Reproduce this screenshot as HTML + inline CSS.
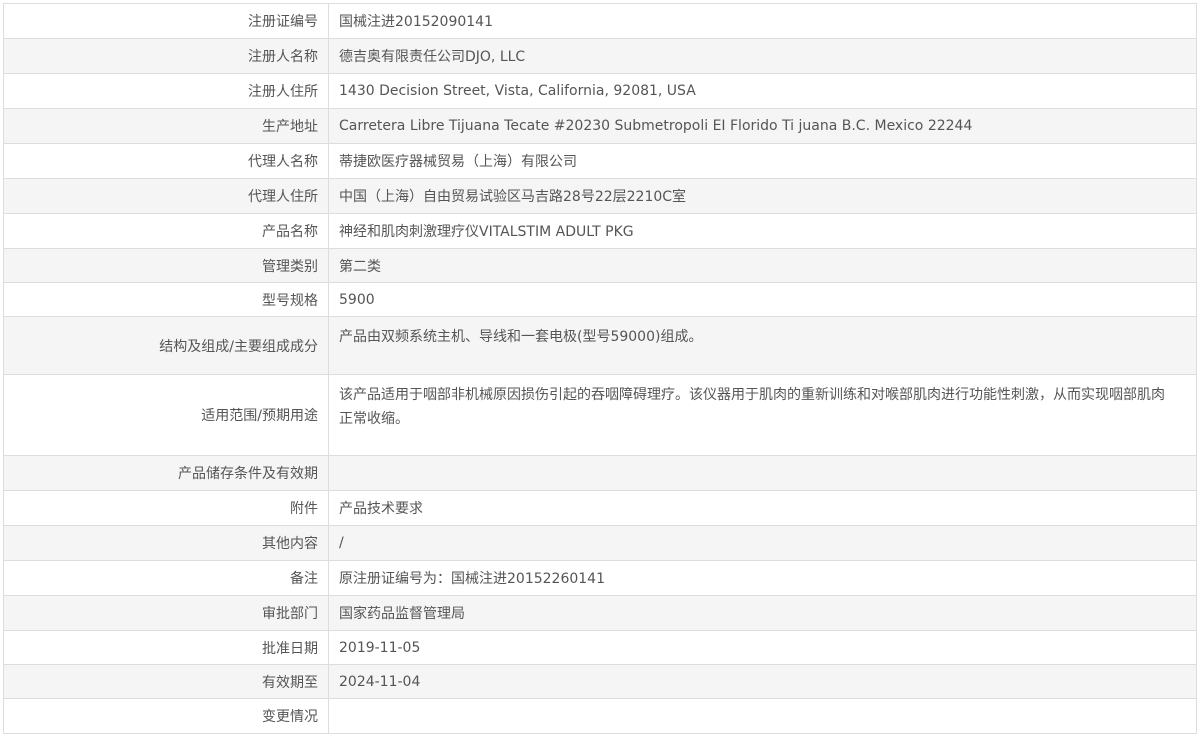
<!DOCTYPE html>
<html><head><meta charset="utf-8"><style>
body{margin:0;background:#fff;}
table{position:absolute;left:3px;top:3px;width:1194px;border-collapse:collapse;font-family:"DejaVu Sans","Noto Sans CJK SC",sans-serif;font-size:14px;color:#555;table-layout:fixed;}
td{border:1px solid #ddd;padding:0 10px;box-sizing:border-box;}
td.l{width:325px;text-align:right;vertical-align:middle;}
td.v{vertical-align:middle;}
td.t{vertical-align:top;padding-top:8px;line-height:24px;}
tr:nth-child(even) td{background:#f5f5f5;}
</style></head><body>
<table>
<tr style="height:35px"><td class="l">注册证编号</td><td class="v">国械注进20152090141</td></tr>
<tr style="height:35px"><td class="l">注册人名称</td><td class="v">德吉奥有限责任公司DJO, LLC</td></tr>
<tr style="height:35px"><td class="l">注册人住所</td><td class="v">1430 Decision Street, Vista, California, 92081, USA</td></tr>
<tr style="height:35px"><td class="l">生产地址</td><td class="v">Carretera Libre Tijuana Tecate #20230 Submetropoli EI Florido Ti juana B.C. Mexico 22244</td></tr>
<tr style="height:35px"><td class="l">代理人名称</td><td class="v">蒂捷欧医疗器械贸易（上海）有限公司</td></tr>
<tr style="height:35px"><td class="l">代理人住所</td><td class="v">中国（上海）自由贸易试验区马吉路28号22层2210C室</td></tr>
<tr style="height:35px"><td class="l">产品名称</td><td class="v">神经和肌肉刺激理疗仪VITALSTIM ADULT PKG</td></tr>
<tr style="height:34px"><td class="l">管理类别</td><td class="v">第二类</td></tr>
<tr style="height:34px"><td class="l">型号规格</td><td class="v">5900</td></tr>
<tr style="height:58px"><td class="l">结构及组成/主要组成成分</td><td class="t">产品由双频系统主机、导线和一套电极(型号59000)组成。</td></tr>
<tr style="height:81px"><td class="l">适用范围/预期用途</td><td class="t">该产品适用于咽部非机械原因损伤引起的吞咽障碍理疗。该仪器用于肌肉的重新训练和对喉部肌肉进行功能性刺激，从而实现咽部肌肉<br>正常收缩。</td></tr>
<tr style="height:35px"><td class="l">产品储存条件及有效期</td><td class="v"></td></tr>
<tr style="height:35px"><td class="l">附件</td><td class="v">产品技术要求</td></tr>
<tr style="height:35px"><td class="l">其他内容</td><td class="v">/</td></tr>
<tr style="height:35px"><td class="l">备注</td><td class="v">原注册证编号为：国械注进20152260141</td></tr>
<tr style="height:35px"><td class="l">审批部门</td><td class="v">国家药品监督管理局</td></tr>
<tr style="height:34px"><td class="l">批准日期</td><td class="v">2019-11-05</td></tr>
<tr style="height:34px"><td class="l">有效期至</td><td class="v">2024-11-04</td></tr>
<tr style="height:35px"><td class="l">变更情况</td><td class="v"></td></tr>
</table>
</body></html>
